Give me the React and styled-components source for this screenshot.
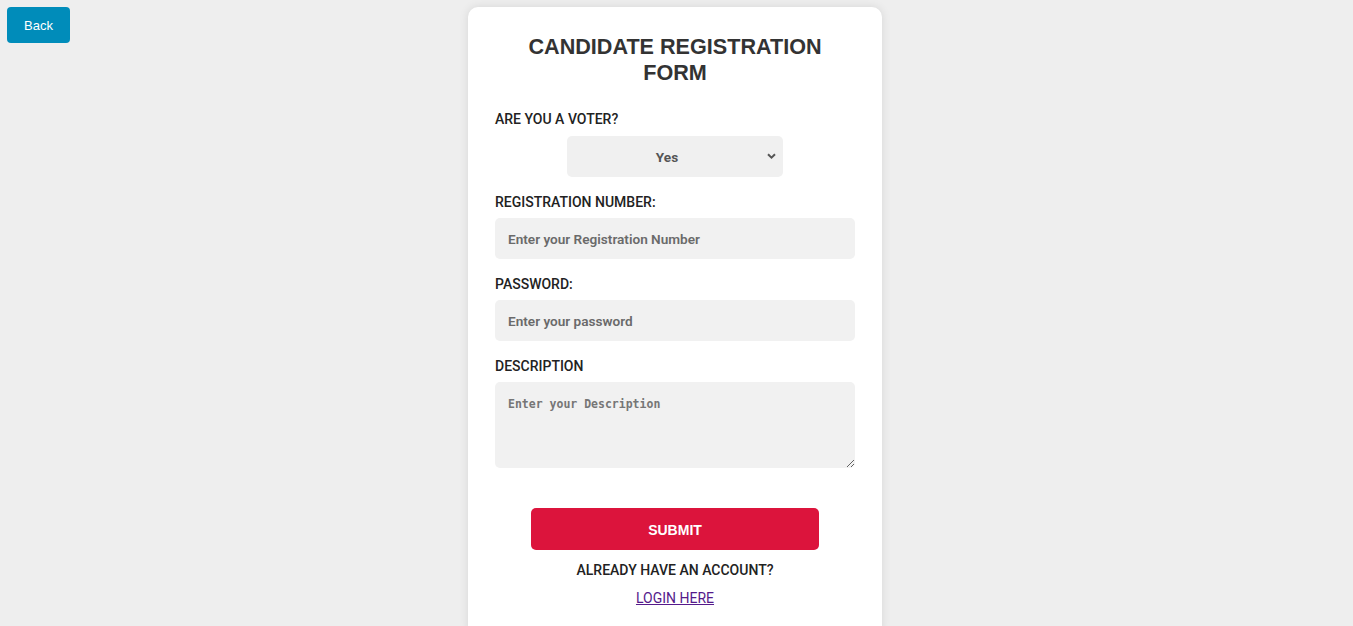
import React from "react";
import styled, { createGlobalStyle } from "styled-components";

const Global = createGlobalStyle`
  html, body { margin: 0; padding: 0; }
  body {
    background: #eeeeee;
    font-family: Roboto, "Liberation Sans", Arial, sans-serif;
  }
  ::-webkit-scrollbar { width: 3px; height: 0; }
  ::-webkit-scrollbar-track { background: #f3f3f3; }
  ::-webkit-scrollbar-thumb { background: #c1c1c1; }
`;

const Page = styled.div`
  display: grid;
  grid-template-columns: 1fr 414px 1fr;
  align-items: start;
  padding: 7px 3px 0 0;
  min-height: 700px;
`;

const BackButton = styled.button`
  justify-self: start;
  margin-left: 7px;
  width: 63px;
  height: 36px;
  border: none;
  border-radius: 4px;
  background: #008cba;
  color: #ffffff;
  font-family: "Liberation Sans", Arial, sans-serif;
  font-size: 13px;
  cursor: pointer;
`;

const Card = styled.div`
  background: #ffffff;
  border-radius: 10px;
  box-shadow: 0 0 10px rgba(0, 0, 0, 0.1);
  padding: 27px 27px 30px;
  display: flex;
  flex-direction: column;
`;

const Title = styled.h2`
  margin: 0 0 25px;
  font-family: "Liberation Sans", Arial, sans-serif;
  font-size: 21.6px;
  line-height: 26px;
  font-weight: 700;
  color: #333333;
  text-align: center;
  padding: 0 30px;
`;

const Field = styled.div`
  display: flex;
  flex-direction: column;
  margin-bottom: ${(p) => p.$gap ?? 17}px;
`;

const Label = styled.label`
  font-family: Roboto, "Liberation Sans", sans-serif;
  font-size: 14px;
  line-height: 16px;
  font-weight: 500;
  color: #222222;
  margin-bottom: 8px;
`;

const SelectWrap = styled.div`
  position: relative;
  align-self: center;
  width: 216px;
  margin-top: 1px;
`;

const Select = styled.select`
  appearance: none;
  width: 100%;
  height: 41px;
  border: none;
  border-radius: 5px;
  background: #f0f0f0;
  padding: 0 16px 0 0;
  text-align: center;
  text-align-last: center;
  font-family: Roboto, "Liberation Sans", sans-serif;
  font-weight: 700;
  font-size: 13.6px;
  color: #555555;
  outline: none;
`;

const Chevron = styled.svg`
  position: absolute;
  right: 7px;
  top: 17px;
  pointer-events: none;
`;

const Input = styled.input`
  height: 41px;
  box-sizing: border-box;
  border: none;
  border-radius: 5px;
  background: #f1f1f1;
  padding: 0 13px;
  font-family: Roboto, "Liberation Sans", sans-serif;
  font-size: 13.6px;
  font-weight: 600;
  color: #333;
  outline: none;
  &::placeholder { color: #6a6a6a; }
`;

const TextArea = styled.textarea`
  height: 86px;
  box-sizing: border-box;
  border: none;
  border-radius: 5px;
  background: #f1f1f1;
  padding: 15px 13px 13px;
  font-family: "DejaVu Sans Mono", monospace;
  font-size: 11.5px;
  font-weight: 600;
  color: #333;
  outline: none;
  &::placeholder { color: #767676; }
`;

const Submit = styled.button`
  align-self: center;
  width: 288px;
  height: 42px;
  margin-top: 23px;
  border: none;
  border-radius: 5px;
  background: #dc143c;
  color: #ffffff;
  font-family: "Liberation Sans", Arial, sans-serif;
  font-size: 14px;
  font-weight: 700;
  padding-top: 2px;
  cursor: pointer;
`;

const Note = styled.p`
  margin: 12px 0 0;
  text-align: center;
  font-family: Roboto, "Liberation Sans", sans-serif;
  font-size: 14px;
  line-height: 16px;
  font-weight: ${(p) => p.$weight ?? 500};
  color: #222222;
`;

const Link = styled.a`
  color: #551a8b;
  text-decoration: underline;
  font-weight: 400;
`;

export default function App() {
  return (
    <>
      <Global />
      <Page>
        <BackButton>Back</BackButton>
        <Card>
          <Title>CANDIDATE REGISTRATION FORM</Title>
          <Field>
            <Label>ARE YOU A VOTER?</Label>
            <SelectWrap>
              <Select defaultValue="Yes">
                <option>Yes</option>
                <option>No</option>
              </Select>
              <Chevron width="9" height="6" viewBox="0 0 9 6">
                <path d="M1 1.2 L4.5 4.6 L8 1.2" fill="none" stroke="#555" strokeWidth="2" />
              </Chevron>
            </SelectWrap>
          </Field>
          <Field>
            <Label>REGISTRATION NUMBER:</Label>
            <Input placeholder="Enter your Registration Number" />
          </Field>
          <Field>
            <Label>PASSWORD:</Label>
            <Input type="password" placeholder="Enter your password" />
          </Field>
          <Field $gap={17}>
            <Label>DESCRIPTION</Label>
            <TextArea placeholder="Enter your Description" />
          </Field>
          <Submit>SUBMIT</Submit>
          <Note>ALREADY HAVE AN ACCOUNT?</Note>
          <Note $weight={400}>
            <Link href="#">LOGIN HERE</Link>
          </Note>
        </Card>
        <div />
      </Page>
    </>
  );
}
